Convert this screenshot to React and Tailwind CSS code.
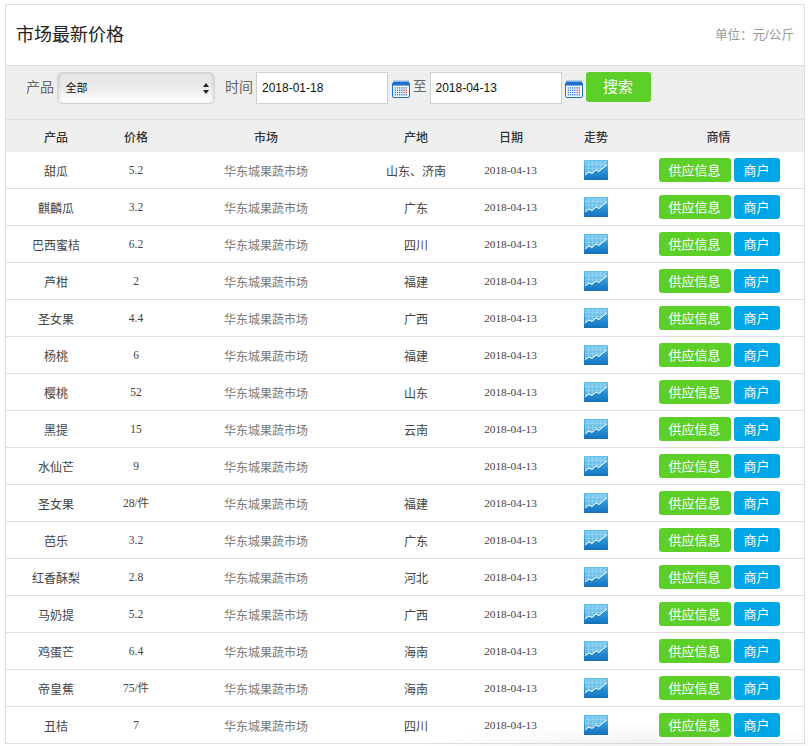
const rows = [
  ["甜瓜", "5.2", "山东、济南"],
  ["麒麟瓜", "3.2", "广东"],
  ["巴西蜜桔", "6.2", "四川"],
  ["芦柑", "2", "福建"],
  ["圣女果", "4.4", "广西"],
  ["杨桃", "6", "福建"],
  ["樱桃", "52", "山东"],
  ["黑提", "15", "云南"],
  ["水仙芒", "9", ""],
  ["圣女果", "28/件", "福建"],
  ["芭乐", "3.2", "广东"],
  ["红香酥梨", "2.8", "河北"],
  ["马奶提", "5.2", "广西"],
  ["鸡蛋芒", "6.4", "海南"],
  ["帝皇蕉", "75/件", "海南"],
  ["丑桔", "7", "四川"],
];

function CalendarIcon({ className }) {
  const dots = [];
  for (let y = 0; y < 4; y++) {
    for (let x = 0; x < 6; x++) {
      dots.push(<rect key={`${x}-${y}`} x={2.6 + x * 2.2} y={7.2 + y * 2.3} width="1.4" height="1.4" fill={x > 3 && y > 0 && y < 3 ? "#e24a4a" : "#3d7fd9"} />);
    }
  }
  return (
    <svg className={className} width="18" height="18" viewBox="0 0 18 18">
      <rect x="0.5" y="2.5" width="17" height="15" rx="1.5" fill="#fff" stroke="#1f6fd0" />
      <rect x="1" y="3" width="16" height="2.6" fill="#1f6fd0" />
      {[2, 4, 6, 8, 10, 12, 14, 16].map((x) => (
        <rect key={x} x={x - 0.5} y="0.5" width="1" height="2.6" fill="#1f6fd0" />
      ))}
      {dots}
    </svg>
  );
}

function ChartIcon() {
  return (
    <svg className="block" width="24" height="20" viewBox="0 0 24 20">
      <defs>
        <linearGradient id="chartbg" x1="0" y1="0" x2="0" y2="1">
          <stop offset="0" stopColor="#7ccbf2" />
          <stop offset="1" stopColor="#4fb0e8" />
        </linearGradient>
        <linearGradient id="chartfill" x1="0" y1="0" x2="0" y2="1">
          <stop offset="0" stopColor="#3aa3e3" />
          <stop offset="1" stopColor="#1577c2" />
        </linearGradient>
        <linearGradient id="chartborder" x1="0" y1="0" x2="0" y2="1">
          <stop offset="0" stopColor="#5cc0ee" />
          <stop offset="1" stopColor="#1f6fb5" />
        </linearGradient>
      </defs>
      <rect x="0.5" y="0.5" width="23" height="19" fill="url(#chartbg)" />
      <path d="M1 4.5H23M1 8.5H23M1 12.5H23M1 16.5H23M4.5 1V19M8.5 1V19M12.5 1V19M16.5 1V19M20.5 1V19" stroke="#bfe7fa" strokeWidth="0.5" opacity="0.7" />
      <path d="M1 15 L5 12 L8 13.5 L12 10 L15 11.5 L19 8 L23 5 V19 H1 Z" fill="url(#chartfill)" />
      <path d="M1 15 L5 12 L8 13.5 L12 10 L15 11.5 L19 8 L23 5" fill="none" stroke="#fff" strokeWidth="1" />
      <rect x="0.5" y="0.5" width="23" height="19" fill="none" stroke="url(#chartborder)" />
    </svg>
  );
}

const th = "h-[32px] p-0 pt-[4px] text-center text-[12px] font-medium text-[#333]";
const td = "h-[37px] p-0 text-center border-b border-[#e0e0e0] text-[#444]";

export default function App() {
  return (
    <div className="relative min-h-[746px] overflow-hidden bg-white pt-[4px] pl-[5px] pr-[3px] font-['Liberation_Sans','Noto_Sans_CJK_SC',sans-serif]">
      <div className="w-[800px] border-x border-t border-[#dedede]">
        <div className="flex h-[61px] items-center justify-between border-b border-[#dedede] pl-[10px] pr-[10px]">
          <h1 className="text-[18px] font-normal text-[#222]">市场最新价格</h1>
          <span className="text-[12.6px] text-[#999]">单位：元/公斤</span>
        </div>
        <div className="flex h-[54px] items-start border-b border-[#dedede] bg-[#efefef] pl-[20px] pt-[6px]">
          <span className="mr-[5px] text-[14px] leading-[30px] text-[#666]">产品</span>
          <div className="relative mr-[10px] -ml-[2px] h-[32px] w-[158px] rounded-[5px] border border-[#d4d4d4] bg-gradient-to-b from-[#e6e6e6] via-[#ececec] to-white shadow-[inset_2px_0_2px_rgba(0,0,0,0.08),inset_-2px_0_2px_rgba(0,0,0,0.08)]">
            <span className="absolute left-[7.5px] top-0 text-[11px] leading-[30px] text-[#111]">全部</span>
            <svg className="absolute right-[5px] top-[10px]" width="6" height="11" viewBox="0 0 6 11">
              <path d="M3 0L6 4H0ZM3 11L0 7H6Z" fill="#222" />
            </svg>
          </div>
          <span className="mr-[3px] text-[14px] leading-[30px] text-[#666]">时间</span>
          <input readOnly value="2018-01-18" className="h-[32px] w-[132px] border border-[#cfcfcf] bg-white pl-[5px] text-[12px] text-[#111] outline-none" />
          <CalendarIcon className="ml-[4px] mr-[3px] mt-[8px] shrink-0" />
          <span className="mr-[3px] text-[13.5px] leading-[30px] text-[#666]">至</span>
          <input readOnly value="2018-04-13" className="h-[32px] w-[132px] border border-[#cfcfcf] bg-white pl-[5px] text-[12px] text-[#111] outline-none" />
          <CalendarIcon className="ml-[3px] mr-[3px] mt-[8px] shrink-0" />
          <button className="h-[30px] w-[65px] rounded-[3px] bg-[#5dcf29] text-[15px] text-white">搜索</button>
        </div>
        <table className="w-full table-fixed border-separate border-spacing-0 font-['Liberation_Serif','Noto_Sans_CJK_SC',serif]">
          <colgroup>
            <col className="w-[100px]" />
            <col className="w-[60px]" />
            <col className="w-[200px]" />
            <col className="w-[100px]" />
            <col className="w-[87px]" />
            <col className="w-[86px]" />
            <col />
          </colgroup>
          <thead className="bg-[#efefef]">
            <tr>
              {["产品", "价格", "市场", "产地"].map((h) => (
                <th key={h} className={th}>{h}</th>
              ))}
              <th className={th + " pl-[3px]"}>日期</th>
              <th className={th}>走势</th>
              <th className={th + " pr-[6px]"}>商情</th>
            </tr>
          </thead>
          <tbody>
            {rows.map(([name, price, origin], i) => (
              <tr key={i}>
                <td className={td + " pt-[4px] text-[12px]"}>{name}</td>
                <td className={td + " pt-[2px] text-[11.5px]"}>{price}</td>
                <td className={td + " pt-[4px] text-[12px] text-[#777]"}>华东城果蔬市场</td>
                <td className={td + " pt-[4px] text-[12px]"}>{origin}</td>
                <td className={td + " pl-[2px] text-[11.3px] text-[#333]"}>2018-04-13</td>
                <td className={td}>
                  <div className="flex justify-center pb-[1px]"><ChartIcon /></div>
                </td>
                <td className={td}>
                  <div className="flex justify-center gap-[3px] pr-[5px] font-['Liberation_Sans','Noto_Sans_CJK_SC',sans-serif]">
                    <a className="flex h-[24px] w-[72px] items-center justify-center rounded-[3px] bg-[#5dcf29] pt-[2px] text-[13px] text-white">供应信息</a>
                    <a className="flex h-[24px] w-[46px] items-center justify-center rounded-[3px] bg-[#00a6e6] pt-[2px] text-[13px] text-white">商户</a>
                  </div>
                </td>
              </tr>
            ))}
          </tbody>
        </table>
      </div>
      <div className="pointer-events-none absolute bottom-0 right-0 h-[24px] w-[400px] bg-[radial-gradient(ellipse_at_60%_130%,rgba(0,0,0,0.07),transparent_70%)]" />
    </div>
  );
}
